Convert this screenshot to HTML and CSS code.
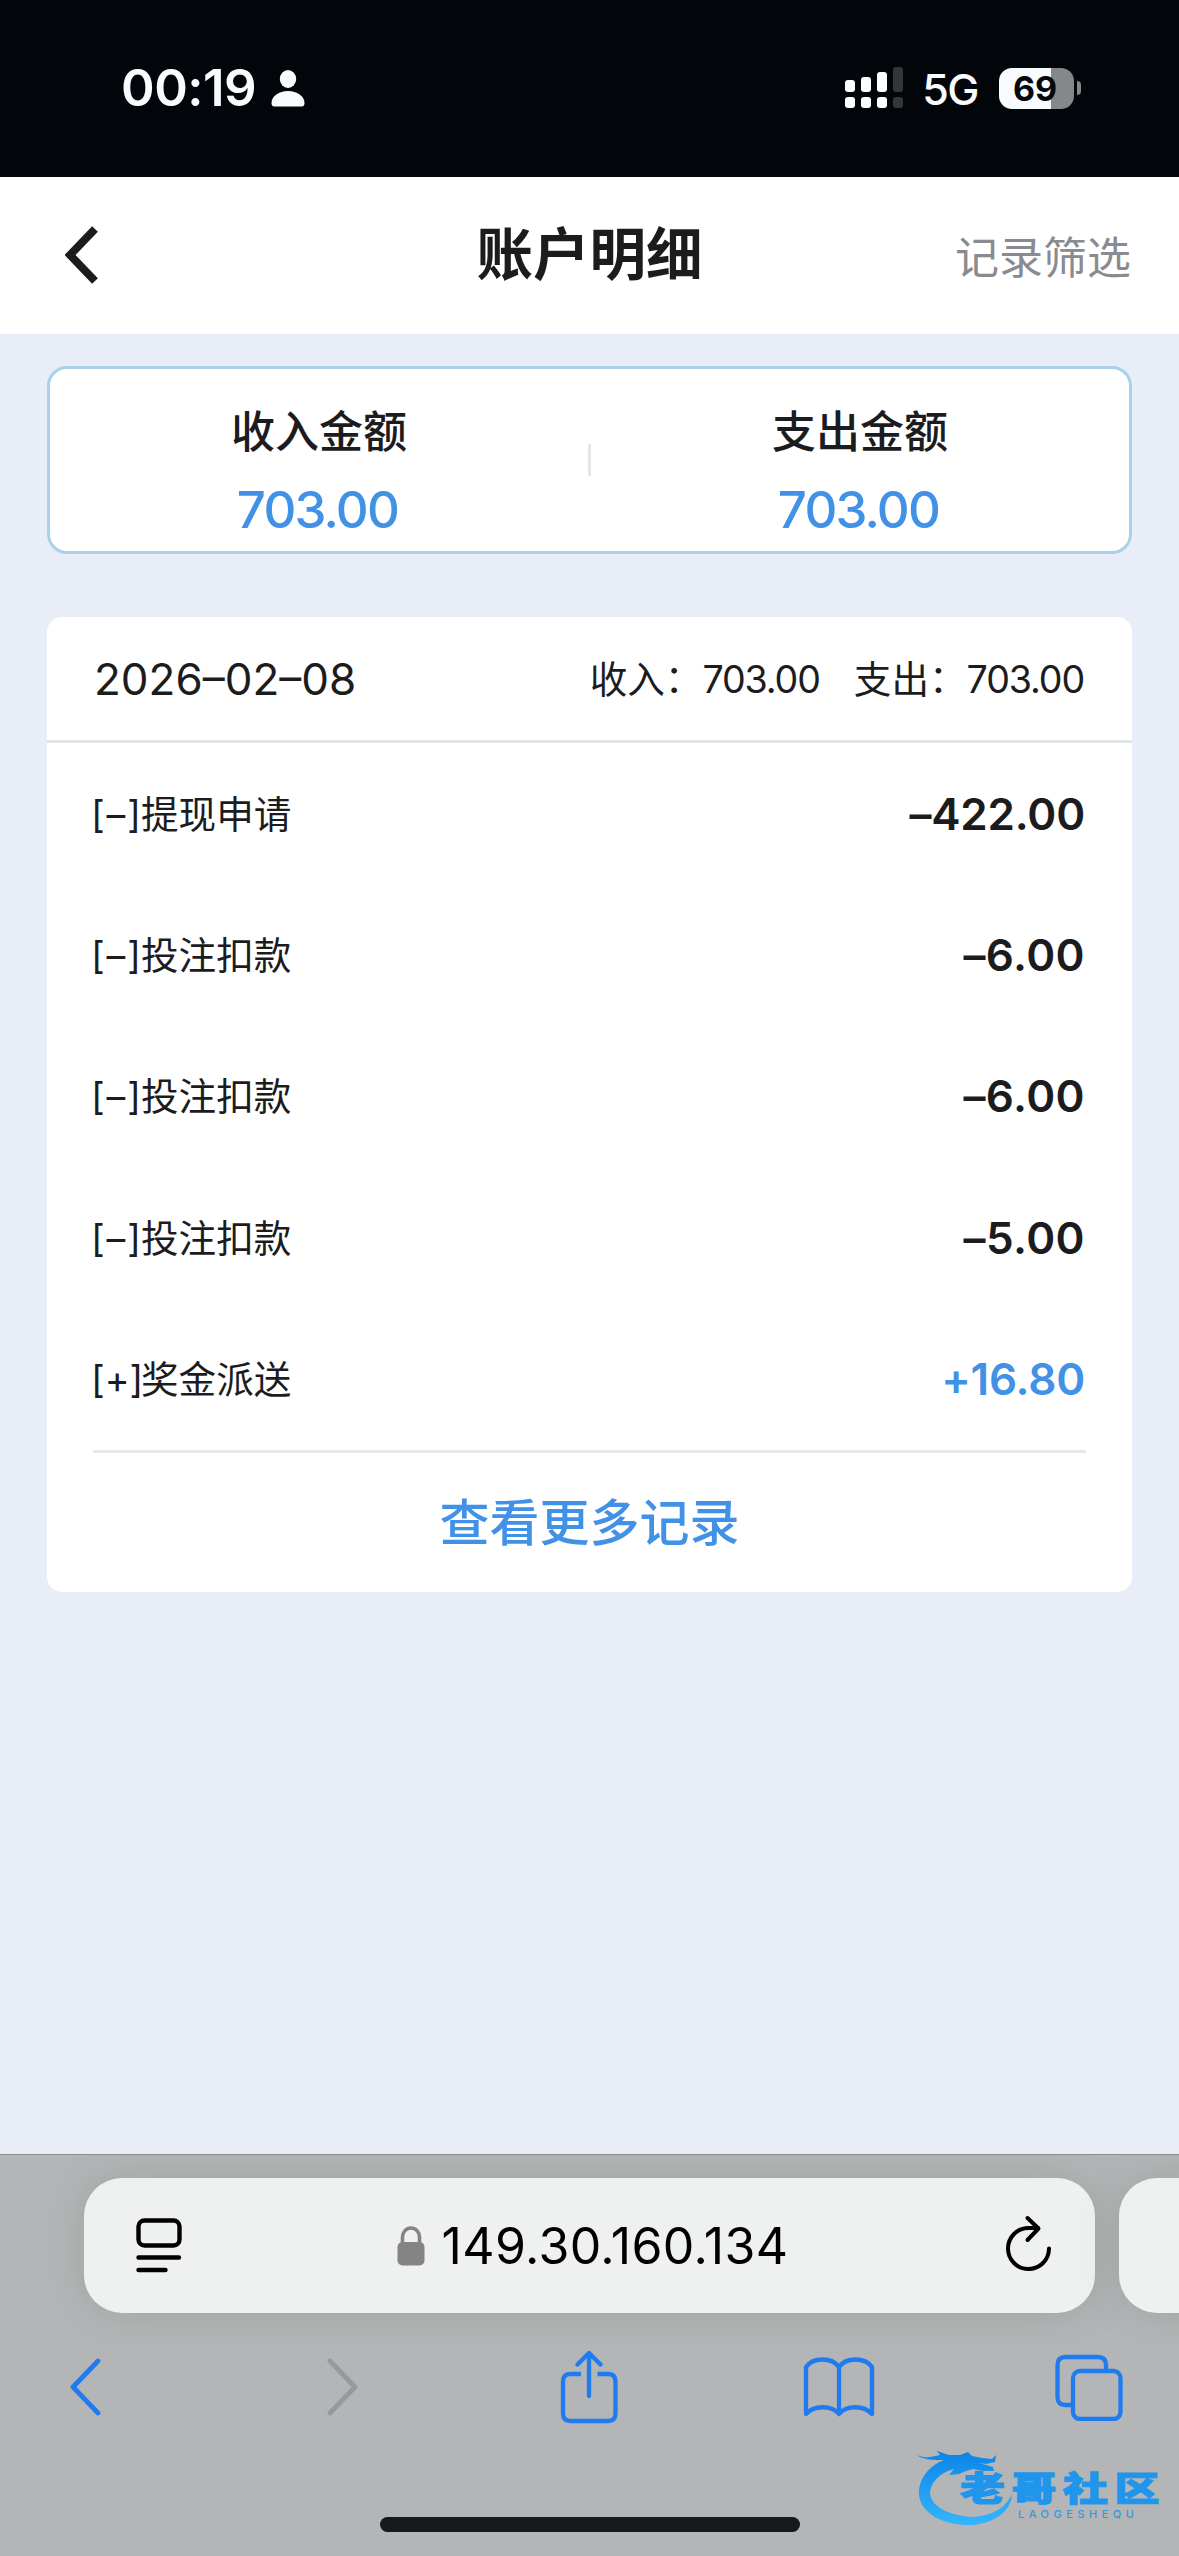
FILE: index.html
```html
<!DOCTYPE html>
<html lang="zh-CN">
<head>
<meta charset="utf-8">
<title>账户明细</title>
<link rel="stylesheet" href="styles.css">
</head>
<body>
<div class="screen">
  <div class="status">
    <div class="status-left">
      <span class="clock">00:19</span>
      <svg class="person" width="34" height="37" viewBox="0 0 34 37"><ellipse cx="17" cy="9" rx="8.2" ry="9" fill="#f8fcff"/><path d="M.5 33C.5 26 8 21 17 21s16.500 5 16.500 12c0 2.500-1 3.500-3 3.500h-27c-2 0-3-1-3-3.500z" fill="#f8fcff"/></svg>
    </div>
    <div class="status-right">
      <svg class="signal" width="58" height="42" viewBox="0 0 58 42"><g fill="#fcfeff"><rect y="13" width="10" height="12" rx="3"/><rect x="16" y="10" width="10" height="15" rx="3"/><rect x="32" y="5" width="10" height="20" rx="3"/><rect y="30" width="10" height="11" rx="3"/><rect x="16" y="30" width="10" height="11" rx="3"/><rect x="32" y="30" width="10" height="11" rx="3"/></g><g fill="#333539"><rect x="48" width="10" height="25" rx="3"/><rect x="48" y="30" width="10" height="11" rx="3"/></g></svg>
      <span class="network">5G</span>
      <div class="battery">69</div>
      <span class="battery-cap"></span>
    </div>
  </div>

  <div class="header">
    <svg class="back" width="34" height="60" viewBox="0 0 34 60"><path d="M30 4 5 30l25 26" fill="none" stroke="#1c1c1e" stroke-width="8"/></svg>
    <h1 class="title">账户明细</h1>
    <span class="filter">记录筛选</span>
  </div>

  <div class="content">
    <div class="summary">
      <div class="sum-cell"><div class="sum-label">收入金额</div><div class="sum-value">703.00</div></div>
      <div class="sum-divider"></div>
      <div class="sum-cell"><div class="sum-label">支出金额</div><div class="sum-value">703.00</div></div>
    </div>

    <div class="records">
      <div class="day">
        <span class="date">2026–02–08</span>
        <div class="totals">
          <span class="total">收入<span class="colon">：</span><span class="num">703.00</span></span>
          <span class="total">支出<span class="colon">：</span><span class="num">703.00</span></span>
        </div>
      </div>
      <div class="rows">
        <div class="row"><span class="name"><span class="tag"><i>[</i><i>–</i><i>]</i></span>提现申请</span><span class="amount">–422.00</span></div>
        <div class="row"><span class="name"><span class="tag"><i>[</i><i>–</i><i>]</i></span>投注扣款</span><span class="amount wide">–6.00</span></div>
        <div class="row"><span class="name"><span class="tag"><i>[</i><i>–</i><i>]</i></span>投注扣款</span><span class="amount wide">–6.00</span></div>
        <div class="row"><span class="name"><span class="tag"><i>[</i><i>–</i><i>]</i></span>投注扣款</span><span class="amount wide">–5.00</span></div>
        <div class="row"><span class="name"><span class="tag"><i>[</i><i>+</i><i>]</i></span>奖金派送</span><span class="amount plus">+16.80</span></div>
      </div>
      <div class="more">查看更多记录</div>
    </div>
  </div>

  <div class="browser">
    <div class="tabs">
      <div class="urlbar">
        <svg width="46" height="55" viewBox="0 0 46 55"><g fill="none" stroke="#000" stroke-width="4.400" stroke-linecap="round"><rect x="2.500" y="2.500" width="41" height="25" rx="6"/><path d="M2.500 39.500h40.500M2.500 52h27"/></g></svg>
        <div class="address">
          <svg width="28" height="40" viewBox="0 0 28 40"><rect x=".5" y="16" width="27" height="23.500" rx="5" fill="#848486"/><path d="M5.500 18V11a8.500 9 0 0 1 17 0v7" fill="none" stroke="#848486" stroke-width="3.600"/></svg>
          <span class="host">149.30.160.134</span>
        </div>
        <svg class="reload" width="46" height="56" viewBox="0 0 46 56"><g fill="none" stroke="#000" stroke-width="4" stroke-linecap="round" stroke-linejoin="round"><path d="M43 33.500A20.500 20.500 0 1 1 22.500 13H32"/><path d="M21.500 3 32.500 13.500 21.500 25"/></g></svg>
      </div>
      <div class="nexttab"></div>
    </div>
    <div class="tools">
      <svg class="tool-back" width="34" height="58" viewBox="0 0 34 58"><path d="M30 3 5 29l25 26" fill="none" stroke="#1e7cf0" stroke-width="4.800" stroke-linecap="round" stroke-linejoin="round"/></svg>
      <svg class="tool-forward" width="34" height="58" viewBox="0 0 34 58"><path d="M4 3 29 29 4 55" fill="none" stroke="#97999b" stroke-width="4.800" stroke-linecap="round" stroke-linejoin="round"/></svg>
      <svg width="58" height="74" viewBox="0 0 58 74"><g fill="none" stroke="#1e7cf0" stroke-width="4.300" stroke-linecap="round" stroke-linejoin="round"><path d="M29 46V4M17.500 14.500 29 3l11.500 11.500"/><path stroke-linecap="butt" d="M21 24H10.500Q3 24 3 31.500V63.500Q3 71 10.500 71H48Q55.500 71 55.500 63.500V31.500Q55.500 24 48 24H37.500"/></g></svg>
      <svg width="72" height="62" viewBox="0 0 72 62"><path d="M36 11C29 1 10 1 3 11V58C11 49 29 49 36 58C43 49 61 49 69 58V11C62 1 43 1 36 11V58" fill="none" stroke="#1e7cf0" stroke-width="4.300" stroke-linejoin="round"/></svg>
      <svg width="68" height="68" viewBox="0 0 68 68"><g fill="none" stroke="#1e7cf0" stroke-width="4.300"><rect x="18" y="18" width="47.500" height="48" rx="7"/><path d="M18 52H10.500Q2.500 52 2.500 44V12Q2.500 4 10.500 4H43Q51 4 51 12V18"/></g></svg>
    </div>
    <div class="home"></div>

    <div class="watermark">
      <svg width="250" height="84" viewBox="0 0 250 84">
        <defs><linearGradient id="wave" x1="0" y1="0" x2="0" y2="1"><stop offset="0" stop-color="#0b84e6"/><stop offset="1" stop-color="#35b5ff"/></linearGradient></defs>
        <path fill="url(#wave)" d="M0 5C8 9 15 7 23 5L20 1 32 5 43 5 51 2 55 6 65 8 75 9 79 5 78 12 69 14 62 13 76 17 77 21 67 21 56 19 49 21 42 24 32 25 37 19C22 23 13 33 13 44C15 57 33 66 56 67C78 65 89 57 95 44C94 62 77 73 56 75C27 76 4 64 2 45C1 29 12 16 27 10C18 10 6 10 0 5Z"/>
      </svg>
      <span class="wm-name">老哥社区</span>
      <span class="wm-latin">LAOGESHEQU</span>
    </div>
  </div>
</div>
</body>
</html>
```
FILE: styles.css
```css
* { box-sizing: border-box; }
body {
  margin: 0;
  font-family: Inter, "Noto Sans CJK SC", sans-serif;
  color: #1c1c1e;
}
.screen {
  width: 1179px;
  height: 2556px;
  display: flex;
  flex-direction: column;
  overflow: hidden;
  background: #e8edf7;
}
svg { display: block; flex: none; }

/* status bar */
.status {
  height: 177px;
  flex: none;
  background: #02060b;
  color: #f8fcff;
  display: flex;
  justify-content: space-between;
  align-items: flex-start;
  padding: 67px 98px 0 121px;
}
.status-left, .status-right { display: flex; align-items: center; height: 42px; }
.clock { font-size: 51px; font-weight: 600; line-height: 42px; letter-spacing: -0.5px; }
.person { margin-left: 15px; }
.network { font-size: 43px; line-height: 42px; margin-left: 19px; font-weight: 500; letter-spacing: -1.5px; padding-top: 2px; }
.battery {
  width: 75px;
  height: 41px;
  margin-left: 21px;
  border-radius: 13px;
  background: linear-gradient(90deg, #f8fcff 52px, #85878a 52px);
  color: #05080c;
  font-size: 34px;
  font-weight: 700;
  line-height: 41px;
  text-align: center;
  padding-right: 3px;
}
.battery-cap { width: 4px; height: 14px; margin-left: 3px; border-radius: 0 4px 4px 0; background: #85878a; }

/* page header */
.header {
  height: 157px;
  flex: none;
  background: #fff;
  display: grid;
  grid-template-columns: 1fr auto 1fr;
  align-items: center;
  padding: 0 48px 1px 65px;
}
.title { margin: 0; font-size: 56.5px; line-height: 80px; font-weight: 600; padding-right: 17px; }
.filter { justify-self: end; font-size: 44px; color: #8a8b90; padding-bottom: 1px; }

.content { flex: 1; padding: 32px 47px 0; }

/* totals */
.summary {
  height: 188px;
  border: 3px solid #a9d2ea;
  border-radius: 20px;
  background: #fff;
  display: flex;
  align-items: center;
}
.sum-cell { flex: 1; text-align: center; padding-top: 22px; }
.sum-label { font-size: 44px; line-height: 64px; font-weight: 500; }
.sum-value { margin-top: 14px; padding-right: 3px; font-size: 51px; line-height: 64px; font-weight: 500; letter-spacing: -1.8px; color: #4192e6; }
.sum-divider { width: 3px; height: 32px; background: #e5e6e8; }

/* record list */
.records { margin-top: 63px; height: 975px; border-radius: 15px; background: #fff; }
.day {
  height: 126px;
  border-bottom: 3px solid #e3e4e6;
  display: flex;
  align-items: center;
  justify-content: space-between;
  padding: 0 48px 0 47px;
}
.date { font-size: 44px; }
.totals { display: flex; gap: 34px; font-size: 37.6px; padding-bottom: 5px; }
.num { letter-spacing: -1.1px; }
.colon { position: relative; top: -1px; }
.rows { margin: 0 46px; border-bottom: 3px solid #e6e7e8; }
.row { height: 141.4px; display: flex; align-items: center; justify-content: space-between; }
.name { font-size: 37.6px; padding-bottom: 5px; }
.tag { display: inline-flex; justify-content: space-between; width: 50px; margin-left: -2px; }
.tag i { font-style: normal; }
.amount { font-size: 44px; font-weight: 600; letter-spacing: -.2px; padding-right: 1px; }
.wide { letter-spacing: .4px; }
.plus { color: #4192e6; }
.more { height: 141px; line-height: 141px; text-align: center; font-size: 50px; font-weight: 500; color: #4192e6; }

/* browser chrome */
.browser {
  height: 402px;
  flex: none;
  position: relative;
  background: #b3b5b7;
  border-top: 1px solid #8c8e93;
  overflow: hidden;
}
.tabs { display: flex; gap: 24px; padding: 23px 0 0 84px; }
.urlbar {
  width: 1011px;
  height: 135px;
  flex: none;
  border-radius: 38px;
  background: #eff1f0;
  box-shadow: 0 0 42px rgba(90, 100, 85, .2);
  display: flex;
  align-items: center;
  justify-content: space-between;
  padding: 0 43px 0 52px;
}
.address { display: flex; align-items: center; gap: 17px; margin-right: 3px; }
.host { font-size: 50px; line-height: 60px; letter-spacing: .35px; color: #000; }
.reload { margin-bottom: 6px; }
.nexttab { width: 120px; flex: none; border-radius: 38px 0 0 38px; background: #eff1f0; box-shadow: 0 0 42px rgba(90, 100, 85, .2); }
.tools { height: 74px; margin-top: 37px; padding-right: 2px; display: grid; grid-template-columns: repeat(5, 250px); justify-content: center; justify-items: center; align-items: center; }
.tool-back { margin-right: 7px; }
.tool-forward { margin-left: 9px; }
.home { width: 420px; height: 15px; margin: 93px auto 0; border-radius: 8px; background: #17191b; }

/* community mark laid over the toolbar */
.watermark { position: absolute; left: 917px; top: 295px; width: 250px; height: 84px; }
.wm-name {
  position: absolute;
  left: 43px;
  top: 23px;
  font-size: 34px;
  line-height: 32px;
  letter-spacing: 5px;
  font-weight: 900;
  white-space: nowrap;
  transform: scaleX(1.32);
  transform-origin: left;
  color: #1f95ec;
  -webkit-text-stroke: 1.2px #1f95ec;
}
.wm-latin { position: absolute; left: 101px; top: 57px; font-size: 11px; line-height: 14px; letter-spacing: 4.5px; font-weight: 500; color: #3498dc; }
```
